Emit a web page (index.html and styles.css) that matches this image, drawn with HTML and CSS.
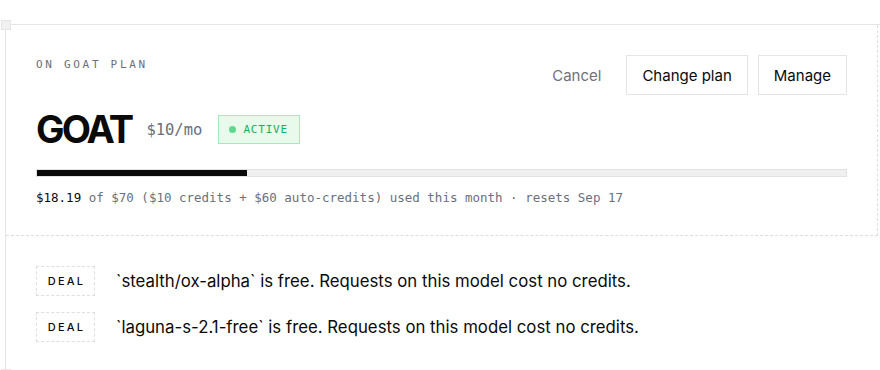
FILE: index.html
```html
<!DOCTYPE html>
<html>
  <head>
    <meta charset="UTF-8" />
    <title>Plan</title>
    <link rel="stylesheet" href="styles.css">
  </head>
  <body>
    <div class="frame">
      <span class="corner top"></span>
      <span class="corner bottom"></span>
      <div class="plan">
        <div class="plan-head">
          <div class="plan-info">
            <div class="eyebrow">ON GOAT PLAN</div>
            <div class="title-row">
              <h1>GOAT</h1>
              <span class="price">$10/mo</span>
              <span class="status"><i class="dot"></i>ACTIVE</span>
            </div>
          </div>
          <div class="actions">
            <button class="link">Cancel</button>
            <button>Change plan</button>
            <button>Manage</button>
          </div>
        </div>
        <div class="meter"><div class="fill" style="width: 26%"></div></div>
        <div class="usage"><b>$18.19</b> of $70 ($10 credits + $60 auto-credits) used this month · resets Sep 17</div>
      </div>
      <div class="deals">
        <div class="deal">
          <span class="tag">DEAL</span>
          <span>`stealth/ox-alpha` is free. Requests on this model cost no credits.</span>
        </div>
        <div class="deal">
          <span class="tag">DEAL</span>
          <span>`laguna-s-2.1-free` is free. Requests on this model cost no credits.</span>
        </div>
      </div>
    </div>
  </body>
</html>
```

FILE: styles.css
```css
* {
  --line: #e5e5e5;
  --dash: #dedede;
  --grey: #6b6f7b;
  --ink: #0a0a0a;
  box-sizing: border-box;
}
body {
  margin: 0;
  padding: 24px 0 0 5px;
  font-family: "Inter", "Liberation Sans", sans-serif;
  color: var(--ink);
  background: #fff;
}
.frame {
  position: relative;
  border-top: 1px solid var(--line);
  border-left: 1px solid var(--line);
  min-height: 360px;
}
.corner {
  position: absolute;
  width: 10px;
  height: 10px;
  background: #f1f1f1;
  border: 1px solid var(--line);
}
.corner.top {
  left: -5px;
  top: -5px;
}
.corner.bottom {
  left: -5px;
  top: 344px;
}
.plan {
  width: 872px;
  padding: 30px 30px 0 30px;
  height: 211px;
  border-right: 1px dashed var(--dash);
  border-bottom: 1px dashed var(--dash);
}
.plan-head {
  display: flex;
  justify-content: space-between;
  align-items: flex-start;
}
.eyebrow {
  font-family: "DejaVu Sans Mono", monospace;
  font-size: 11px;
  letter-spacing: 2.7px;
  color: var(--grey);
  line-height: 20px;
}
.title-row {
  display: flex;
  align-items: center;
  margin-top: 32px;
  height: 44px;
}
h1 {
  margin: 0;
  font-size: 38px;
  font-weight: 700;
  letter-spacing: -2.8px;
  line-height: 44px;
}
.price {
  font-family: "DejaVu Sans Mono", monospace;
  font-size: 15.5px;
  color: var(--grey);
  margin-left: 15px;
  margin-top: 2px;
}
.status {
  display: flex;
  align-items: center;
  gap: 7px;
  margin-left: 16px;
  height: 29px;
  padding: 0 11px 0 10px;
  background: #e7faec;
  border: 1px solid #a6e9bb;
  color: #12b25a;
  font-family: "DejaVu Sans Mono", monospace;
  font-size: 11px;
  letter-spacing: 0.8px;
}
.dot {
  width: 7px;
  height: 7px;
  border-radius: 50%;
  background: #5cd98e;
}
.actions {
  display: flex;
  align-items: center;
  gap: 10px;
}
button {
  font-family: "Inter", "Liberation Sans", sans-serif;
  font-size: 15px;
  color: var(--ink);
  background: #fff;
  border: 1px solid var(--line);
  height: 40px;
  padding: 0 15px;
}
button.link {
  border: none;
  color: #71717a;
  padding: 0 15px;
}
.meter {
  margin-top: 18px;
  height: 8px;
  background: #f0f0f0;
  border: 1px solid #e2e2e2;
}
.fill {
  height: 6px;
  background: #0a0a0a;
}
.usage {
  margin-top: 13px;
  font-family: "DejaVu Sans Mono", monospace;
  font-size: 12.5px;
  color: var(--grey);
}
.usage b {
  font-weight: 400;
  color: var(--ink);
}
.deals {
  padding: 30px 30px;
  display: flex;
  flex-direction: column;
  gap: 16px;
}
.deal {
  display: flex;
  align-items: center;
  gap: 21px;
  font-size: 16.8px;
}
.tag {
  display: flex;
  align-items: center;
  justify-content: center;
  width: 59px;
  height: 30px;
  border: 1px dashed var(--dash);
  font-size: 11px;
  font-weight: 500;
  letter-spacing: 2.2px;
  padding-left: 2px;
}
```
